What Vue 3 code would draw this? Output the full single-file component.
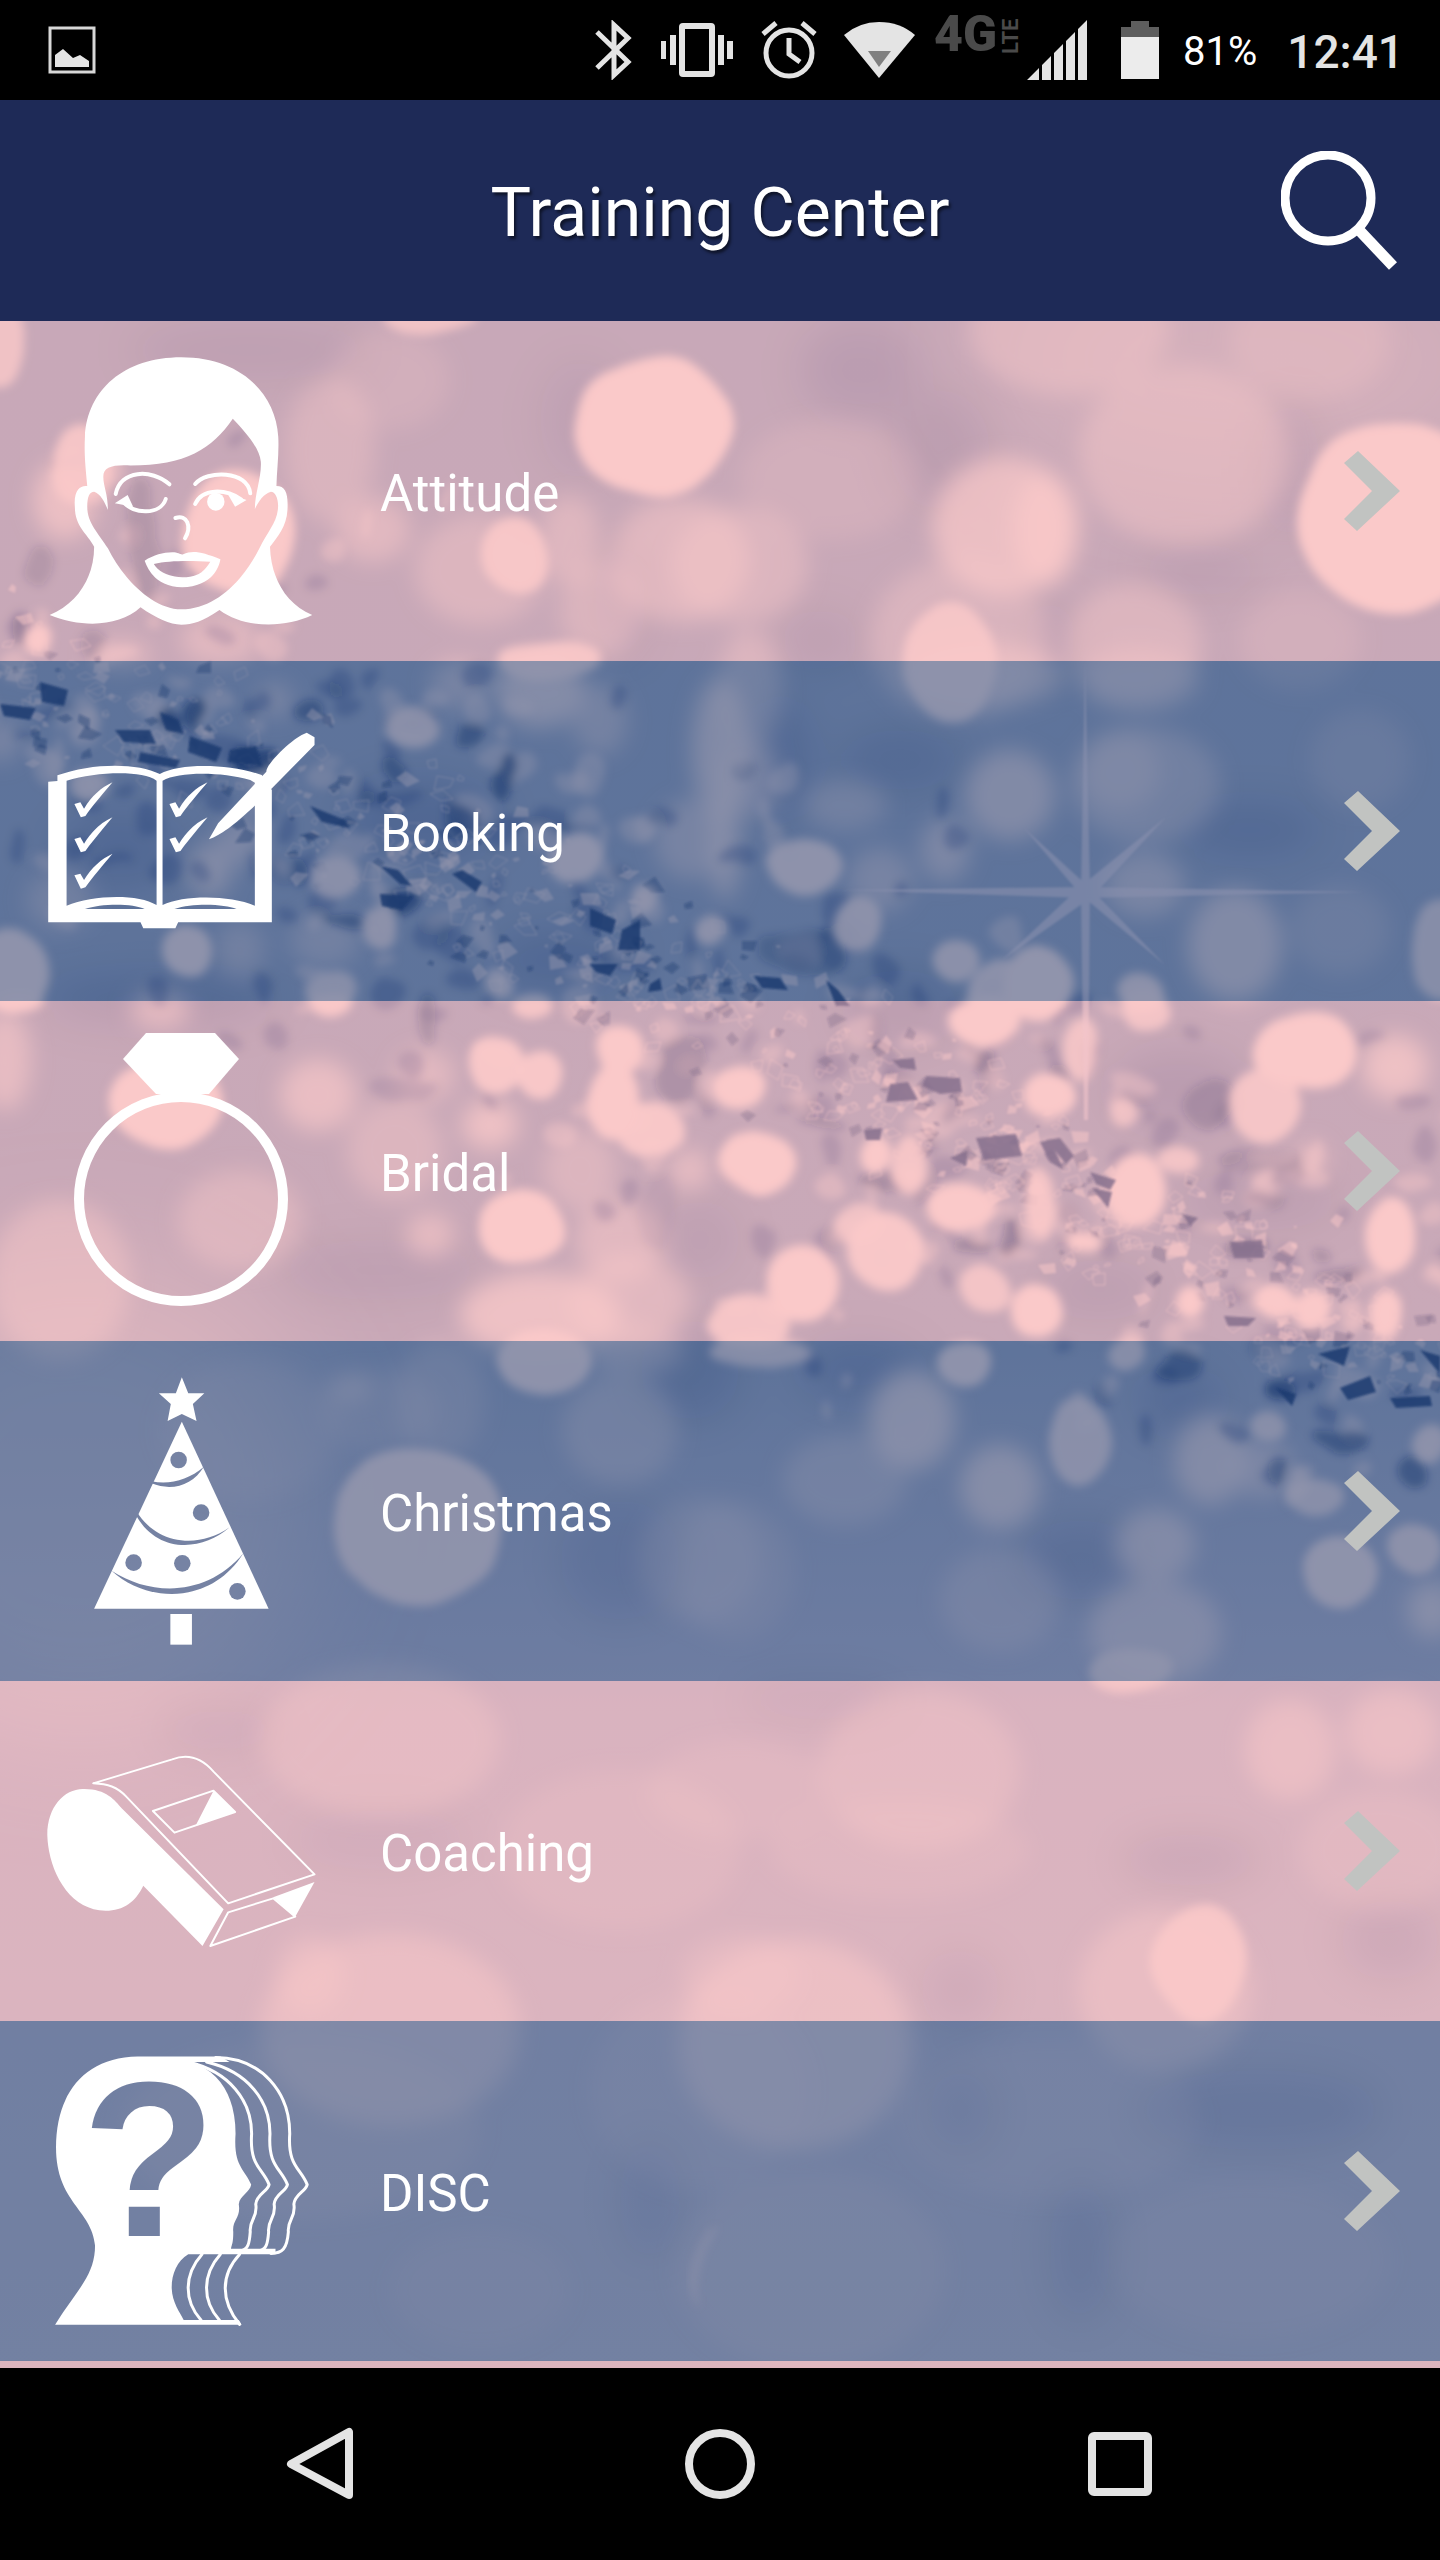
<script setup>
const rows = [
  { id: 'attitude', label: 'Attitude' },
  { id: 'booking', label: 'Booking' },
  { id: 'bridal', label: 'Bridal' },
  { id: 'christmas', label: 'Christmas' },
  { id: 'coaching', label: 'Coaching' },
  { id: 'disc', label: 'DISC' },
]

// Bokeh lights: centre x, centre y, radius x, radius y, strength
const lights = [
  [653, 427, 78, 68, 1], [1005, 526, 73, 69, 0.7], [1045, 530, 32, 56, 0.75], [1395, 518, 97, 97, 1],
  [1184, 455, 105, 90, 0.4], [950, 660, 46, 60, 0.85], [960, 640, 90, 80, 0.35], [1133, 645, 68, 62, 0.4],
  [1069, 330, 100, 65, 0.4], [1310, 340, 80, 60, 0.25], [515, 556, 34, 38, 0.9], [480, 570, 65, 55, 0.4],
  [373, 530, 37, 32, 0.5], [680, 560, 70, 62, 0.5], [740, 565, 68, 58, 0.4], [80, 465, 30, 40, 0.9],
  [65, 500, 32, 40, 0.7], [240, 533, 55, 62, 1], [0, 345, 22, 42, 0.8], [430, 320, 50, 12, 0.8],
  [35, 638, 14, 15, 1], [120, 655, 30, 14, 0.6], [550, 660, 52, 20, 0.9], [220, 640, 40, 25, 0.5],
  [330, 450, 45, 72, 0.35], [390, 380, 60, 50, 0.2], [570, 540, 30, 45, 0.45], [600, 610, 40, 48, 0.4],
  [830, 480, 90, 60, 0.2], [1300, 640, 60, 50, 0.2],
  [411, 728, 30, 20, 0.9], [540, 690, 45, 38, 0.75], [600, 720, 28, 36, 0.45], [458, 685, 28, 25, 0.5],
  [275, 700, 18, 18, 0.5], [720, 750, 28, 72, 0.7], [575, 860, 28, 26, 0.95], [335, 875, 25, 20, 0.85],
  [380, 930, 18, 22, 0.9], [188, 952, 25, 27, 0.95], [240, 950, 25, 28, 0.4], [10, 970, 42, 42, 0.95],
  [325, 940, 35, 28, 0.4], [330, 990, 25, 22, 0.8], [60, 900, 34, 30, 0.4], [210, 870, 22, 28, 0.7],
  [240, 840, 22, 25, 0.6], [500, 985, 12, 14, 0.8], [645, 900, 13, 14, 0.9], [710, 930, 16, 15, 0.9],
  [90, 785, 20, 14, 0.8], [0, 740, 22, 22, 0.5], [690, 840, 36, 40, 0.5], [805, 865, 38, 28, 0.95],
  [858, 925, 22, 28, 0.9], [955, 960, 22, 20, 0.9], [1037, 984, 36, 38, 1], [1000, 990, 34, 28, 0.9],
  [1140, 992, 26, 22, 0.9], [1010, 795, 45, 45, 0.7], [1145, 785, 75, 58, 0.4], [1120, 770, 40, 40, 0.4],
  [1235, 945, 47, 56, 0.7], [985, 676, 80, 32, 0.55], [1140, 680, 60, 32, 0.4], [945, 850, 25, 32, 0.6],
  [845, 805, 42, 25, 0.4], [880, 880, 32, 32, 0.5], [1145, 885, 40, 32, 0.55], [1440, 950, 28, 50, 0.8],
  [1340, 930, 50, 45, 0.25], [750, 690, 32, 60, 0.4], [725, 850, 16, 50, 0.7], [750, 780, 32, 40, 0.5],
  [1360, 760, 50, 50, 0.2],
  [168, 1102, 55, 46, 1], [520, 1226, 43, 39, 1], [318, 1095, 38, 36, 0.65], [495, 1065, 30, 28, 0.95],
  [540, 1075, 22, 22, 0.95], [620, 1048, 24, 24, 1], [615, 1100, 24, 40, 1], [650, 1130, 32, 26, 0.95],
  [490, 1125, 28, 24, 0.75], [425, 1075, 30, 26, 0.5], [395, 1150, 48, 50, 0.4], [160, 1010, 30, 20, 0.6],
  [330, 1003, 22, 12, 0.9], [20, 1000, 24, 10, 0.9], [530, 1005, 20, 13, 0.9], [690, 1170, 20, 20, 0.6],
  [580, 1170, 36, 40, 0.4], [540, 1315, 80, 42, 0.75], [630, 1300, 60, 45, 0.5], [430, 1235, 24, 22, 0.6],
  [60, 1280, 70, 80, 0.45], [240, 1220, 62, 50, 0.4], [620, 1240, 45, 40, 0.5], [5, 1060, 26, 50, 0.6],
  [740, 1088, 28, 22, 1], [757, 1163, 38, 32, 1], [804, 1282, 38, 36, 1], [886, 1252, 38, 38, 0.95],
  [860, 1225, 26, 22, 0.8], [750, 1322, 42, 26, 0.9], [961, 1208, 34, 26, 1], [985, 1022, 38, 28, 1],
  [1050, 1095, 25, 22, 1], [1035, 1312, 28, 28, 1], [985, 1290, 25, 22, 0.85], [1138, 1190, 30, 36, 1],
  [1305, 1050, 54, 39, 1], [1265, 1105, 36, 38, 0.9], [1395, 1067, 33, 32, 0.75], [1390, 1236, 24, 36, 1],
  [1180, 1160, 20, 15, 0.85], [1310, 1160, 18, 18, 0.5], [1120, 1110, 14, 15, 0.8], [1145, 1010, 26, 24, 0.85],
  [1310, 1310, 20, 20, 1], [1275, 1300, 18, 15, 1], [1190, 1305, 13, 17, 1], [1390, 1312, 16, 24, 1],
  [875, 1155, 14, 20, 1], [908, 1165, 18, 30, 0.9], [1040, 1200, 15, 35, 0.9], [1080, 1238, 18, 10, 1],
  [1080, 1050, 16, 30, 0.85],
  [419, 1526, 86, 79, 0.95], [545, 1360, 48, 35, 0.95], [620, 1430, 58, 55, 0.35], [380, 1410, 60, 40, 0.2],
  [350, 1388, 22, 14, 0.4], [440, 1400, 45, 60, 0.25], [635, 1350, 50, 25, 0.4], [700, 1560, 62, 62, 0.25],
  [912, 1420, 43, 50, 0.75], [845, 1480, 62, 45, 0.35], [1080, 1442, 33, 46, 0.85], [1000, 1487, 40, 42, 0.75],
  [965, 1362, 27, 23, 0.95], [1155, 1545, 40, 36, 0.65], [1155, 1632, 66, 52, 0.6], [1000, 1600, 60, 52, 0.3],
  [1210, 1460, 36, 45, 0.7], [1262, 1468, 32, 30, 0.5], [1315, 1495, 28, 18, 0.8], [1340, 1572, 36, 38, 0.95],
  [1415, 1550, 28, 25, 0.9], [1432, 1610, 25, 28, 0.75], [1270, 1428, 16, 14, 0.8], [1125, 1353, 20, 15, 0.8],
  [760, 1352, 50, 17, 0.8], [735, 1570, 60, 70, 0.2], [1430, 1445, 16, 20, 0.9], [250, 1430, 90, 70, 0.15],
  [390, 2030, 130, 96, 0.5], [310, 1975, 34, 40, 0.4], [795, 2045, 117, 105, 0.55], [740, 1975, 60, 40, 0.3],
  [1165, 1990, 87, 80, 0.45], [1200, 1962, 47, 60, 0.9], [380, 1740, 120, 76, 0.35], [920, 1770, 100, 80, 0.35],
  [740, 1790, 92, 50, 0.2], [900, 1850, 130, 50, 0.2], [1290, 1750, 45, 50, 0.5], [1392, 1732, 46, 42, 0.5],
  [620, 1850, 120, 80, 0.2], [1130, 1672, 40, 22, 0.8], [1380, 1850, 80, 60, 0.25], [700, 2090, 110, 100, 0.15],
  [1050, 2120, 150, 80, 0.15], [1250, 2260, 140, 80, 0.12], [480, 2290, 90, 60, 0.12],
  [810, 2270, 135, 100, 0.18], [300, 2130, 180, 90, 0.18],
]
const crisp = lights.filter((l) => l[4] >= 0.8)
const hazy = lights.filter((l) => l[4] < 0.8)

// Shadowed pockets between the lights
const shadows = [
  [40, 570, 14, 24, 0.3], [145, 540, 18, 60, 0.3], [95, 640, 14, 12, 0.35], [20, 630, 8, 12, 0.5],
  [195, 710, 14, 16, 0.7], [310, 715, 16, 12, 0.5], [505, 778, 12, 22, 0.6], [395, 770, 10, 10, 0.5],
  [465, 730, 14, 12, 0.5], [250, 755, 20, 14, 0.8], [170, 720, 10, 14, 0.8], [460, 820, 18, 14, 0.5],
  [300, 870, 10, 12, 0.5], [345, 920, 20, 7, 0.5], [400, 900, 18, 10, 0.7], [800, 950, 45, 24, 0.3],
  [430, 1015, 10, 22, 0.35], [400, 1090, 34, 12, 0.2], [680, 1070, 24, 32, 0.4], [1210, 1100, 24, 26, 0.4],
  [985, 1062, 10, 16, 0.6], [1060, 1075, 12, 12, 0.45], [885, 1182, 22, 10, 0.45], [1010, 1240, 11, 18, 0.6],
  [975, 1240, 16, 6, 0.5], [1260, 1160, 40, 14, 0.2], [1240, 1250, 20, 10, 0.6], [1340, 1275, 28, 8, 0.5],
  [1325, 1252, 12, 6, 0.4], [1180, 1365, 20, 14, 0.5], [1280, 1390, 16, 12, 0.7], [1340, 1440, 26, 10, 0.5],
  [1415, 1470, 14, 12, 0.5], [820, 1125, 28, 6, 0.4], [1270, 1200, 20, 8, 0.3], [660, 1210, 16, 40, 0.1],
]

// Broad, very soft darker areas
const shade = [
  [250, 350, 120, 30, 0.12], [860, 370, 60, 50, 0.16], [940, 450, 50, 60, 0.14], [1290, 470, 30, 70, 0.12],
  [580, 420, 40, 60, 0.1], [620, 600, 25, 60, 0.12], [820, 640, 40, 30, 0.12], [1050, 640, 25, 40, 0.12],
  [1200, 570, 60, 25, 0.12], [120, 850, 60, 40, 0.16], [420, 820, 80, 40, 0.18], [780, 760, 30, 60, 0.16],
  [900, 760, 60, 30, 0.14], [1250, 830, 70, 25, 0.16], [160, 1000, 120, 25, 0.16], [560, 960, 70, 30, 0.18],
  [900, 1010, 60, 40, 0.14], [1180, 1090, 70, 40, 0.18], [380, 1270, 100, 30, 0.12], [700, 1240, 40, 40, 0.12],
  [1100, 1290, 60, 30, 0.14], [1260, 1200, 80, 30, 0.14], [690, 1370, 50, 50, 0.14], [860, 1370, 60, 30, 0.16],
  [620, 1560, 60, 60, 0.1], [1080, 1560, 60, 40, 0.14], [1180, 1400, 40, 30, 0.16], [220, 1730, 60, 20, 0.1],
  [1190, 1860, 70, 25, 0.14], [380, 1840, 90, 30, 0.08], [1390, 1940, 50, 40, 0.12], [960, 1990, 40, 40, 0.1],
  [820, 1700, 80, 20, 0.08], [1260, 2110, 120, 40, 0.1], [960, 2110, 30, 40, 0.1], [1080, 2250, 30, 70, 0.1],
  [650, 2200, 30, 60, 0.08],
]

// Flat dark flakes lying in the glitter band
const flakes = [
  '40,682 68,690 64,706 42,702', '0,704 36,708 30,720 4,716', '160,712 178,720 184,734 166,730',
  '115,730 150,730 156,744 124,742', '190,736 222,748 216,762 188,752', '140,752 180,760 176,768 138,762',
  '230,750 256,746 262,766 228,762', '310,806 345,820 350,828 322,822', '380,866 398,870 412,886 400,884',
  '452,874 462,870 482,882 476,892', '380,894 414,896 402,910 382,906', '590,908 616,920 612,934 590,926',
  '622,930 640,920 640,950 618,950', '590,964 618,964 610,976 596,972', '650,984 660,978 662,990 648,992',
  '754,976 780,978 788,990 762,988', '826,980 838,990 850,1006 836,1006',
  '892,1060 914,1058 916,1070 900,1068', '890,1084 908,1082 918,1100 886,1102', '926,1076 960,1078 962,1092 940,1094 922,1086',
  '976,1138 1016,1134 1022,1156 984,1160', '1040,1142 1050,1140 1064,1170 1050,1162', '1046,1140 1060,1138 1074,1156 1066,1164',
  '1090,1172 1116,1180 1110,1190 1096,1184', '1092,1188 1112,1192 1108,1208', '950,1158 968,1150 966,1166',
  '864,1130 882,1128 880,1140 866,1140', '1182,1214 1198,1218 1190,1226', '1230,1242 1262,1240 1264,1258 1234,1258',
  '1224,1316 1256,1318 1248,1326 1228,1326', '1318,1354 1350,1346 1344,1366', '1340,1388 1370,1376 1376,1392 1348,1400',
  '1390,1398 1430,1396 1432,1406 1396,1408', '1276,1388 1296,1394 1292,1406', '1420,1350 1440,1356 1440,1374',
]

// Repeatable scatter along the diagonal band
const spine = [[-20, 668], [200, 745], [400, 850], [560, 925], [700, 995], [860, 1072], [1000, 1140], [1150, 1230], [1300, 1310], [1460, 1390]]
let seed = 71
const rand = () => {
  seed = (seed * 16807) % 2147483647
  return seed / 2147483647
}
const alongBand = (width) => {
  const t = rand() * (spine.length - 1)
  const i = Math.floor(t)
  const f = t - i
  const spread = (rand() + rand() + rand() - 1.5) * width
  return [
    spine[i][0] + (spine[i + 1][0] - spine[i][0]) * f - spread * 0.4,
    spine[i][1] + (spine[i + 1][1] - spine[i][1]) * f + spread,
  ]
}
const glitter = Array.from({ length: 760 }, () => {
  const [x, y] = alongBand(66)
  const size = 3 + rand() * 9
  const turn = rand() * 6.28
  const pts = [0, 1.3, 2.9, 4.4].map((a) => {
    const r = size * (0.5 + rand() * 0.8)
    return `${Math.round(x + Math.cos(a + turn) * r)},${Math.round(y + Math.sin(a + turn) * r * 0.8)}`
  })
  return { points: pts.join(' '), kind: ['dark', 'pale', 'line', 'line'][Math.floor(rand() * 4)] }
})
const grains = Array.from({ length: 380 }, () => {
  const [x, y] = alongBand(220)
  return {
    cx: Math.round(x),
    cy: Math.round(y),
    rx: Math.round(5 + rand() * 14),
    ry: Math.round(5 + rand() * 12),
    kind: rand() < 0.5 ? 'grain-dark' : 'grain-pale',
  }
})

const checks = [[0, 0], [0, 105], [0, 214], [207, 0], [207, 105]]
const tick = 'M162 432 L175 427 L183 446 C200 408 220 383 245 367 C225 400 200 440 186 468 L176 472 Z'
const profile = 'M410 122 C500 150 548 235 548 330 C543 425 572 430 586 478 C582 500 559 505 557 535 C562 575 542 580 545 615 C543 650 540 665 526 670'
const neck = 'M440 680 C400 740 400 815 438 872'
</script>

<template>
  <div class="screen">
    <header class="status">
      <svg class="icon" width="48" height="48" viewBox="48 26 48 48" aria-label="Screenshot saved">
        <rect x="50" y="28" width="44" height="44" fill="none" stroke="#d8d8d8" stroke-width="3" />
        <path d="M55 67 V55 L63 49 L73 58 L80 55 L89 61 V67 Z" fill="#e4e4e4" />
      </svg>
      <div class="status-right">
        <svg class="icon" width="42" height="60" viewBox="595 20 42 60" aria-label="Bluetooth">
          <path d="M597 32 L628 62 L614 75 V25 L628 38 L597 68" fill="none" stroke="#e4e4e4" stroke-width="5" />
        </svg>
        <svg class="icon" width="76" height="60" viewBox="661 20 76 60" aria-label="Vibrate">
          <path fill="#e4e4e4" fill-rule="evenodd" d="M683 23 H711 Q715 23 715 27 V73 Q715 77 711 77 H683 Q679 77 679 73 V27 Q679 23 683 23 Z M685 29 V71 H709 V29 Z" />
          <path fill="#e4e4e4" d="M661 41 h5 v18 h-5z M670 35 h6 v30 h-6z M718 35 h6 v30 h-6z M727 41 h6 v18 h-6z" />
        </svg>
        <svg class="icon" width="59" height="60" viewBox="761 20 59 60" aria-label="Alarm">
          <g fill="none" stroke="#e4e4e4" stroke-width="5">
            <circle cx="789" cy="53" r="23" />
            <path d="M763 34 L776 23 M802 23 L815 34 M789 38 V54 L800 62" />
          </g>
        </svg>
        <div class="network">
          <svg class="icon" width="84" height="60" viewBox="844 20 84 60" aria-label="Wi-Fi">
            <path fill="#e4e4e4" d="M844 35 Q859 22 879 22 Q900 22 915 35 L879 78 Z" />
            <path fill="#808080" d="M868 51 H891 L879 67 Z" />
          </svg>
          <div class="lte"><span class="gen">4G</span><span class="tech">LTE</span></div>
          <svg class="icon" width="70" height="60" viewBox="1027 20 70 60" aria-label="Signal">
            <path fill="#e4e4e4" d="M1027 80 L1039 68 V80 Z M1042 65 L1051 56 V80 H1042 Z M1054 53 L1063 44 V80 H1054 Z M1066 41 L1075 32 V80 H1066 Z M1078 29 L1087 20 V80 H1078 Z" />
          </svg>
        </div>
        <svg class="icon" width="38" height="60" viewBox="1121 20 38 60" aria-label="Battery">
          <path fill="#5e5e5e" d="M1131 21 H1149 V27 H1159 V38 H1121 V27 H1131 Z" />
          <path fill="#ececec" d="M1121 37 H1159 V79 H1121 Z" />
        </svg>
        <span class="percent">81%</span>
        <time class="clock">12:41</time>
      </div>
    </header>

    <div class="titlebar">
      <h1>Training Center</h1>
      <button class="search" type="button" aria-label="Search">
        <svg width="118" height="120" viewBox="1281 150 118 120">
          <circle cx="1328" cy="197" r="43" fill="none" stroke="#fff" stroke-width="9" />
          <path d="M1359 229 L1393 265" stroke="#fff" stroke-width="11" />
        </svg>
      </button>
    </div>

    <main class="content">
      <svg class="backdrop" viewBox="0 321 1440 2047" preserveAspectRatio="xMidYMid slice" aria-hidden="true">
        <defs>
          <linearGradient id="wash" x1="0" y1="0" x2="0" y2="1">
            <stop offset="0" stop-color="#9a8792" />
            <stop offset="0.5" stop-color="#9c8892" />
            <stop offset="0.68" stop-color="#bd9ca1" />
            <stop offset="1" stop-color="#c4a2a0" />
          </linearGradient>
          <filter id="b1"><feGaussianBlur stdDeviation="1" /></filter>
          <filter id="b4"><feGaussianBlur stdDeviation="4" /></filter>
          <filter id="b11"><feGaussianBlur stdDeviation="11" /></filter>
          <filter id="b20"><feGaussianBlur stdDeviation="20" /></filter>
          <filter id="uneven">
            <feTurbulence type="fractalNoise" baseFrequency="0.018" numOctaves="2" seed="4" result="noise" />
            <feDisplacementMap in="SourceGraphic" in2="noise" scale="30" xChannelSelector="R" yChannelSelector="G" />
            <feGaussianBlur stdDeviation="4" />
          </filter>
          <filter id="rounded">
            <feTurbulence type="fractalNoise" baseFrequency="0.014" numOctaves="1" seed="4" result="noise" />
            <feDisplacementMap in="SourceGraphic" in2="noise" scale="18" xChannelSelector="R" yChannelSelector="G" />
            <feGaussianBlur stdDeviation="5" />
          </filter>
          <filter id="b60" x="-50%" y="-50%" width="200%" height="200%"><feGaussianBlur stdDeviation="60" /></filter>
        </defs>
        <rect y="321" width="1440" height="2047" fill="url(#wash)" />
        <g filter="url(#b60)" fill="#ffc8b4">
          <ellipse cx="80" cy="1500" rx="240" ry="240" opacity="0.35" />
          <ellipse cx="1250" cy="360" rx="260" ry="120" opacity="0.25" />
        </g>
        <g filter="url(#b20)" fill="#14143c">
          <ellipse v-for="(s, i) in shade" :key="i" :cx="s[0]" :cy="s[1]" :rx="s[2]" :ry="s[3]" :opacity="s[4]" />
        </g>
        <g filter="url(#b11)" fill="#ffc8b4">
          <ellipse v-for="(l, i) in hazy" :key="i" :cx="l[0]" :cy="l[1]" :rx="l[2]" :ry="l[3]" :opacity="l[4]" />
        </g>
        <g filter="url(#uneven)">
          <ellipse v-for="(g, i) in grains" :key="i" :cx="g.cx" :cy="g.cy" :rx="g.rx" :ry="g.ry" :class="g.kind" />
          <g fill="#14143c">
            <ellipse v-for="(s, i) in shadows" :key="i" :cx="s[0]" :cy="s[1]" :rx="s[2]" :ry="s[3]" :opacity="s[4]" />
          </g>
        </g>
        <g filter="url(#b1)">
          <polygon v-for="(g, i) in glitter" :key="i" :points="g.points" :class="g.kind" />
        </g>
        <g filter="url(#rounded)" fill="#ffc8b4">
          <ellipse v-for="(l, i) in crisp" :key="i" :cx="l[0]" :cy="l[1]" :rx="l[2]" :ry="l[3]" :opacity="l[4]" />
        </g>
        <g filter="url(#b1)" fill="#14143c" opacity="0.85">
          <polygon v-for="(f, i) in flakes" :key="i" :points="f" />
        </g>
        <g filter="url(#b1)" fill="#f0c0b8" opacity="0.6">
          <path d="M1085 661 L1090 886 L1088 1120 L1084 1120 L1081 892 Z" />
          <path d="M840 890 L1086 887 L1365 892 L1086 898 Z" />
          <path d="M1024 828 L1091 889 L1165 965 L1081 895 Z M1166 817 L1092 897 L1002 960 L1080 887 Z" />
        </g>
        <path d="M708 2230 Q675 2280 700 2310 Q690 2270 720 2225 Z" fill="#ffc8b4" opacity="0.45" filter="url(#b4)" />
      </svg>

      <ul class="list">
        <li v-for="row in rows" :key="row.id">
          <a :href="'#' + row.id">
            <svg class="art" width="270" height="270" viewBox="46 36 270 270" aria-hidden="true">
              <g v-if="row.id === 'attitude'" transform="scale(.45918 .33333)" fill="#fff">
                <path fill-rule="evenodd" d="M108 885 C170 850 205 770 205 680 C190 640 163 620 163 560 C160 510 175 495 190 498 C186 440 183 400 185 350 C190 210 270 112 395 112 C520 112 600 215 606 350 C608 400 603 450 602 498 C622 498 628 520 626 570 C624 620 605 650 588 680 C590 770 620 850 680 885 C620 925 530 925 478 870 C440 905 420 914 395 914 C370 914 340 895 306 862 C260 920 180 925 108 885 Z M507 296 C530 330 565 380 568 425 C570 470 555 520 555 568 C562 545 575 520 590 515 C600 515 608 540 605 570 C602 610 580 640 565 685 C530 780 470 868 395 868 C330 868 265 770 235 685 C215 640 190 610 190 560 C190 530 195 515 205 515 C218 520 228 545 235 570 C235 520 225 500 225 470 C225 445 240 436 270 436 C400 440 460 390 507 296 Z" />
                <path fill-rule="evenodd" d="M315 722 C335 705 355 697 375 697 C390 697 393 706 399 703 C420 690 440 696 480 718 C475 760 450 800 397 802 C345 800 325 760 315 722 Z M335 732 C370 720 420 722 458 725 C445 755 430 772 397 772 C365 770 345 755 335 732 Z" />
                <path d="M250 550 L278 525 L290 560 Z M495 520 L537 540 L512 560 Z" />
                <ellipse cx="470" cy="545" rx="19" ry="27" />
                <g class="pen" stroke-width="4">
                  <path d="M252 522 C262 450 330 445 369 493 M425 492 C450 450 540 450 545 520 M268 545 C290 585 350 585 361 537 M425 552 C440 505 490 505 525 538 M382 594 C408 582 418 620 403 655" />
                </g>
              </g>

              <g v-else-if="row.id === 'booking'" transform="scale(.45918 .33333)" fill="#fff">
                <path fill-rule="evenodd" d="M105 365 L125 363 V346 C200 308 300 308 348 342 C395 308 500 312 570 345 L592 390 V787 H388 L382 805 H312 L306 787 H105 Z M145 362 C210 335 310 330 341 362 V735 C300 700 200 705 145 737 Z M354 362 C390 335 480 335 545 360 L555 368 V737 C500 705 400 705 354 735 Z M185 747 C220 730 290 730 315 747 Z M380 747 C420 728 490 732 515 747 Z" />
                <path d="M455 538 L475 490 L580 335 C580 310 635 240 657 225 L668 218 L685 232 V255 L560 430 C530 470 490 520 455 538 Z" />
                <path v-for="(c, i) in checks" :key="i" :d="tick" :transform="`translate(${c[0]} ${c[1]})`" />
              </g>

              <g v-else-if="row.id === 'bridal'" fill="#fff">
                <path d="M146 33 H215 L239 59 L209 94 H156 L123 59 Z" />
                <circle cx="181" cy="199" r="102" fill="none" stroke="#fff" stroke-width="10" />
              </g>

              <g v-else-if="row.id === 'christmas'" transform="scale(.45918 .33333)" fill="#fff">
                <mask id="baubles" maskUnits="userSpaceOnUse" x="200" y="240" width="400" height="580">
                  <rect x="200" y="240" width="400" height="580" fill="#fff" />
                  <g fill="#000">
                    <ellipse cx="389" cy="360" rx="18" ry="25" />
                    <ellipse cx="438" cy="518" rx="18" ry="25" />
                    <ellipse cx="291" cy="668" rx="18" ry="25" />
                    <ellipse cx="397" cy="670" rx="18" ry="25" />
                    <ellipse cx="517" cy="754" rx="18" ry="25" />
                    <path d="M330 424 C370 435 410 420 444 380 C420 435 375 455 330 430 Z M298 515 C340 610 430 630 500 562 C440 635 345 640 298 530 Z M243 692 C330 770 450 770 530 640 C460 795 320 790 243 692 Z" />
                  </g>
                </mask>
                <path d="M396 112 L410 160 H445 L420 192 L428 243 L396 222 L365 243 L372 192 L346 160 H383 Z" />
                <path d="M396 245 L585 806 H205 Z" mask="url(#baubles)" />
                <path d="M371 822 H418 V914 H371 Z" />
              </g>

              <g v-else-if="row.id === 'coaching'" transform="scale(.45918 .33333)" fill="#fff">
                <path d="M180 327 C230 325 250 360 265 385 L487 688 L441 798 L312 617 C295 665 270 692 230 692 C150 692 105 570 103 465 C103 380 140 328 180 327 Z" />
                <path d="M465 332 L512 396 L427 434 Z M595 652 L685 606 L643 710 Z" />
                <g class="pen" stroke-width="2">
                  <path d="M203 310 L375 238 C410 220 440 235 465 275 L685 583 L497 670 L275 350 C255 320 235 312 203 310 Z" />
                  <path d="M333 393 L465 332 L512 396 L380 458 Z M497 697 L595 655 L643 710 L458 798 Z" />
                </g>
              </g>

              <g v-else>
                <mask id="question" maskUnits="userSpaceOnUse" x="46" y="30" width="270" height="280">
                  <rect x="46" y="30" width="270" height="280" fill="#fff" />
                  <text class="question" x="149" y="216" text-anchor="middle" fill="#000">?</text>
                </mask>
                <g mask="url(#question)">
                  <path transform="scale(.45918 .34439)" fill="#fff" d="M120 885 C170 780 207 740 207 655 C200 550 122 530 122 370 C122 220 180 108 300 106 H480 L500 122 H415 C485 150 513 235 513 330 C508 425 532 430 547 478 C545 500 522 510 520 535 C525 575 505 580 508 615 C508 650 505 650 503 664 H600 V680 H410 C385 700 373 740 374 780 C375 820 392 850 400 871 H520 L526 885 Z" />
                </g>
                <g class="pen" stroke-width="3" transform="scale(.45918 .34439)">
                  <path :d="profile" />
                  <path :d="profile" transform="translate(40 0)" />
                  <path d="M470 109 C570 110 631 210 631 330 C626 425 655 430 669 478 C665 500 642 505 640 535 C645 575 625 580 628 615 C625 665 615 677 590 678" />
                  <path :d="neck" />
                  <path :d="neck" transform="translate(40 0)" />
                  <path d="M522 680 C480 740 480 815 522 884" />
                </g>
              </g>
            </svg>
            <span class="label">{{ row.label }}</span>
            <svg class="chevron" width="56" height="80" viewBox="0 0 56 80" aria-hidden="true">
              <path d="M14 0 L56 40 L13 80 L0 68 L28 40 L0 12 Z" fill="#c1c3c1" />
            </svg>
          </a>
        </li>
        <li class="next"></li>
      </ul>
    </main>

    <nav class="navbar">
      <button type="button" aria-label="Back">
        <svg width="80" height="80" viewBox="280 2424 80 80">
          <path d="M349 2432 V2495 L291 2464 Z" fill="none" stroke="#e4e4e4" stroke-width="8" stroke-linejoin="round" />
        </svg>
      </button>
      <button type="button" aria-label="Home">
        <svg width="80" height="80" viewBox="0 0 80 80">
          <circle cx="40" cy="40" r="31" fill="none" stroke="#e4e4e4" stroke-width="8" />
        </svg>
      </button>
      <button type="button" aria-label="Recent apps">
        <svg width="80" height="80" viewBox="0 0 80 80">
          <rect x="12" y="12" width="56" height="56" rx="2" fill="none" stroke="#e4e4e4" stroke-width="8" />
        </svg>
      </button>
    </nav>
  </div>
</template>

<style>
body {
  margin: 0;
  background: #000;
}
</style>

<style scoped>
.screen {
  display: flex;
  flex-direction: column;
  min-height: 100vh;
  font-family: Roboto, 'Liberation Sans', sans-serif;
  color: #fff;
}

svg {
  display: block;
  flex: none;
}

button {
  padding: 0;
  border: 0;
  background: none;
  cursor: pointer;
}

.status {
  display: flex;
  align-items: center;
  justify-content: space-between;
  height: 100px;
  padding: 0 36px 0 48px;
  background: #000;
}

.status-right {
  display: flex;
  align-items: center;
  gap: 24px;
}

.network {
  display: flex;
  align-items: center;
  gap: 6px;
}

.lte {
  display: flex;
  width: 87px;
  height: 68px;
  justify-content: space-between;
  color: #4a4a4a;
  line-height: 36px;
}

.gen {
  font-size: 50px;
  font-weight: 900;
}

.tech {
  height: 38px;
  font-size: 22px;
  font-weight: 700;
  line-height: 20px;
  writing-mode: vertical-rl;
  transform: rotate(180deg);
}

.percent {
  font-size: 40px;
  line-height: 60px;
  padding: 4px 6px 0 0;
}

.clock {
  font-size: 46px;
  font-weight: 500;
  line-height: 60px;
  color: #e4e4e4;
  padding-top: 4px;
}

.titlebar {
  display: grid;
  grid-template-columns: 118px 1fr 118px;
  align-items: center;
  height: 221px;
  padding: 0 41px;
  background: #1e2a57;
}

h1 {
  grid-column: 2;
  margin: 0;
  padding-top: 4px;
  font-size: 68px;
  font-weight: 400;
  line-height: 80px;
  text-align: center;
  text-shadow: 2px 3px 3px #0008;
}

.content {
  position: relative;
  display: flex;
  flex: 1;
  overflow: hidden;
}

.backdrop {
  position: absolute;
  inset: 0;
  width: 100%;
  height: 100%;
}

.dark {
  fill: #14143c;
  opacity: 0.4;
}

.pale {
  fill: #ffc8b4;
  opacity: 0.5;
}

.line {
  fill: none;
  stroke: #ffc8b4;
  stroke-width: 1;
  opacity: 0.5;
}

.grain-dark {
  fill: #14143c;
  opacity: 0.26;
}

.grain-pale {
  fill: #ffc8b4;
  opacity: 0.4;
}

.list {
  position: relative;
  display: flex;
  flex: 1;
  flex-direction: column;
  margin: 0;
  padding: 0;
  list-style: none;
}

li {
  background: rgba(245, 202, 222, 0.5);
}

li:nth-child(even) {
  background: rgba(33, 96, 164, 0.5);
}

.next {
  flex: 1;
}

a {
  display: flex;
  align-items: center;
  height: 340px;
  box-sizing: border-box;
  padding: 0 40px 0 46px;
  color: inherit;
  text-decoration: none;
}

.art {
  overflow: visible;
}

.pen {
  fill: none;
  stroke: #fff;
  stroke-linecap: round;
  stroke-linejoin: round;
}

.pen path {
  vector-effect: non-scaling-stroke;
}

.question {
  font: 700 220px 'Liberation Sans', Arial, sans-serif;
}

.label {
  flex: 1;
  padding: 6px 0 0 64px;
  font-size: 51px;
  line-height: 64px;
}

.navbar {
  display: flex;
  align-items: center;
  justify-content: center;
  gap: 320px;
  height: 192px;
  background: #000;
}
</style>
